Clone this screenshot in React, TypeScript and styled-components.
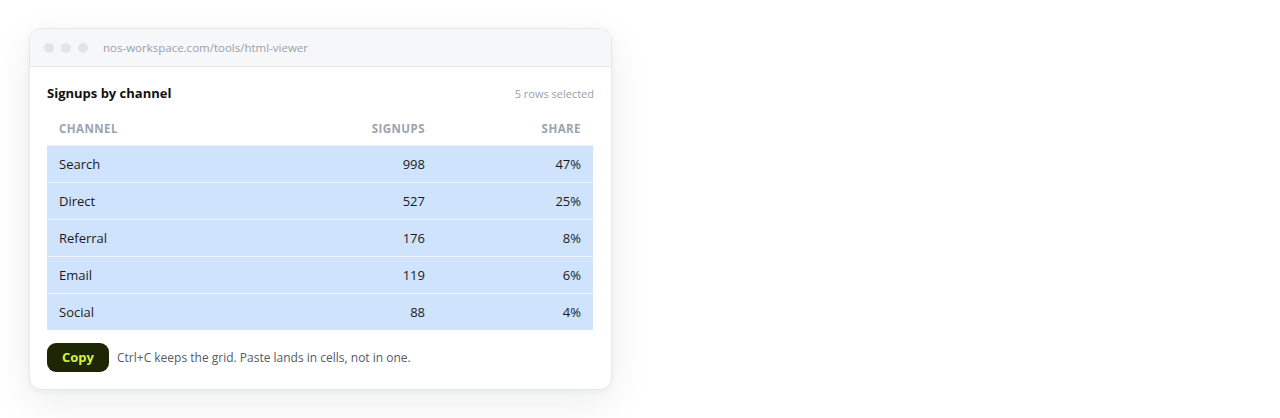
import React from 'react';
import styled, { createGlobalStyle } from 'styled-components';

const rows = [
  { channel: 'Search', signups: 998, share: '47%' },
  { channel: 'Direct', signups: 527, share: '25%' },
  { channel: 'Referral', signups: 176, share: '8%' },
  { channel: 'Email', signups: 119, share: '6%' },
  { channel: 'Social', signups: 88, share: '4%' },
];

export default function App() {
  return (
    <Page>
      <GlobalStyle />
      <Window>
        <TitleBar>
          <Dots>
            <Dot />
            <Dot />
            <Dot />
          </Dots>
          <Url>nos-workspace.com/tools/html-viewer</Url>
        </TitleBar>
        <Body>
          <Header>
            <Title>Signups by channel</Title>
            <Meta>5 rows selected</Meta>
          </Header>
          <Table>
            <colgroup>
              <col style={{ width: 234 }} />
              <col style={{ width: 156 }} />
              <col style={{ width: 156 }} />
            </colgroup>
            <thead>
              <tr>
                <Th>Channel</Th>
                <Th $right>Signups</Th>
                <Th $right>Share</Th>
              </tr>
            </thead>
            <tbody>
              {rows.map((r) => (
                <Row key={r.channel}>
                  <Td>{r.channel}</Td>
                  <Td $right>{r.signups}</Td>
                  <Td $right>{r.share}</Td>
                </Row>
              ))}
            </tbody>
          </Table>
          <Footer>
            <CopyButton>Copy</CopyButton>
            <Note>Ctrl+C keeps the grid. Paste lands in cells, not in one.</Note>
          </Footer>
        </Body>
      </Window>
    </Page>
  );
}

const GlobalStyle = createGlobalStyle`
  body {
    margin: 0;
    background: #ffffff;
    font-family: "Open Sans", "Noto Sans", sans-serif;
    color: #111;
  }
`;

const Page = styled.div`
  padding: 28px 0 0 29px;
  height: 418px;
  box-sizing: border-box;
`;

const Window = styled.div`
  width: 583px;
  height: 362px;
  box-sizing: border-box;
  background: #fff;
  border: 1px solid #e6e8eb;
  border-radius: 12px;
  overflow: hidden;
  box-shadow: 0 12px 40px rgba(15, 23, 42, 0.08), 0 2px 6px rgba(15, 23, 42, 0.04);
  display: flex;
  flex-direction: column;
`;

const TitleBar = styled.div`
  height: 38px;
  box-sizing: border-box;
  background: #f6f7f9;
  border-bottom: 1px solid #e6e8eb;
  display: flex;
  align-items: center;
  padding: 0 0 0 14px;
  gap: 15px;
`;

const Dots = styled.div`
  display: flex;
  gap: 7px;
`;

const Dot = styled.span`
  width: 10px;
  height: 10px;
  border-radius: 50%;
  background: #e2e4e8;
`;

const Url = styled.span`
  font-size: 11.5px;
  color: #9aa0a8;
`;

const Body = styled.div`
  padding: 15px 17px 0 17px;
  display: flex;
  flex-direction: column;
`;

const Header = styled.div`
  display: flex;
  justify-content: space-between;
  align-items: center;
  height: 22px;
  margin-bottom: 9px;
`;

const Title = styled.span`
  font-size: 13px;
  font-weight: 700;
  color: #111;
`;

const Meta = styled.span`
  font-size: 11px;
  color: #9aa0a8;
`;

const Table = styled.table`
  width: 546px;
  border-collapse: collapse;
  table-layout: fixed;
`;

const Th = styled.th<{ $right?: boolean }>`
  height: 32px;
  padding: 0 12px 1px;
  box-sizing: border-box;
  text-align: ${(p) => (p.$right ? 'right' : 'left')};
  font-size: 11.5px;
  font-weight: 700;
  letter-spacing: 0.04em;
  text-transform: uppercase;
  color: #9ca3af;
  border-bottom: 1px solid #eceef1;
`;

const Row = styled.tr`
  background: #cfe3fd;
  & + & td {
    border-top: 1px solid #eef5ff;
  }
`;

const Td = styled.td<{ $right?: boolean }>`
  height: 36px;
  padding: 0 12px;
  text-align: ${(p) => (p.$right ? 'right' : 'left')};
  font-size: 13px;
  color: #1a1a1a;
`;

const Footer = styled.div`
  display: flex;
  align-items: center;
  gap: 8px;
  margin-top: 13px;
`;

const CopyButton = styled.button`
  width: 62px;
  height: 29px;
  border: none;
  border-radius: 9px;
  background: #1d2605;
  color: #d4f53c;
  font-family: "Open Sans", "Noto Sans", sans-serif;
  font-size: 13px;
  font-weight: 700;
  cursor: pointer;
`;

const Note = styled.span`
  font-size: 12px;
  color: #555b63;
`;
